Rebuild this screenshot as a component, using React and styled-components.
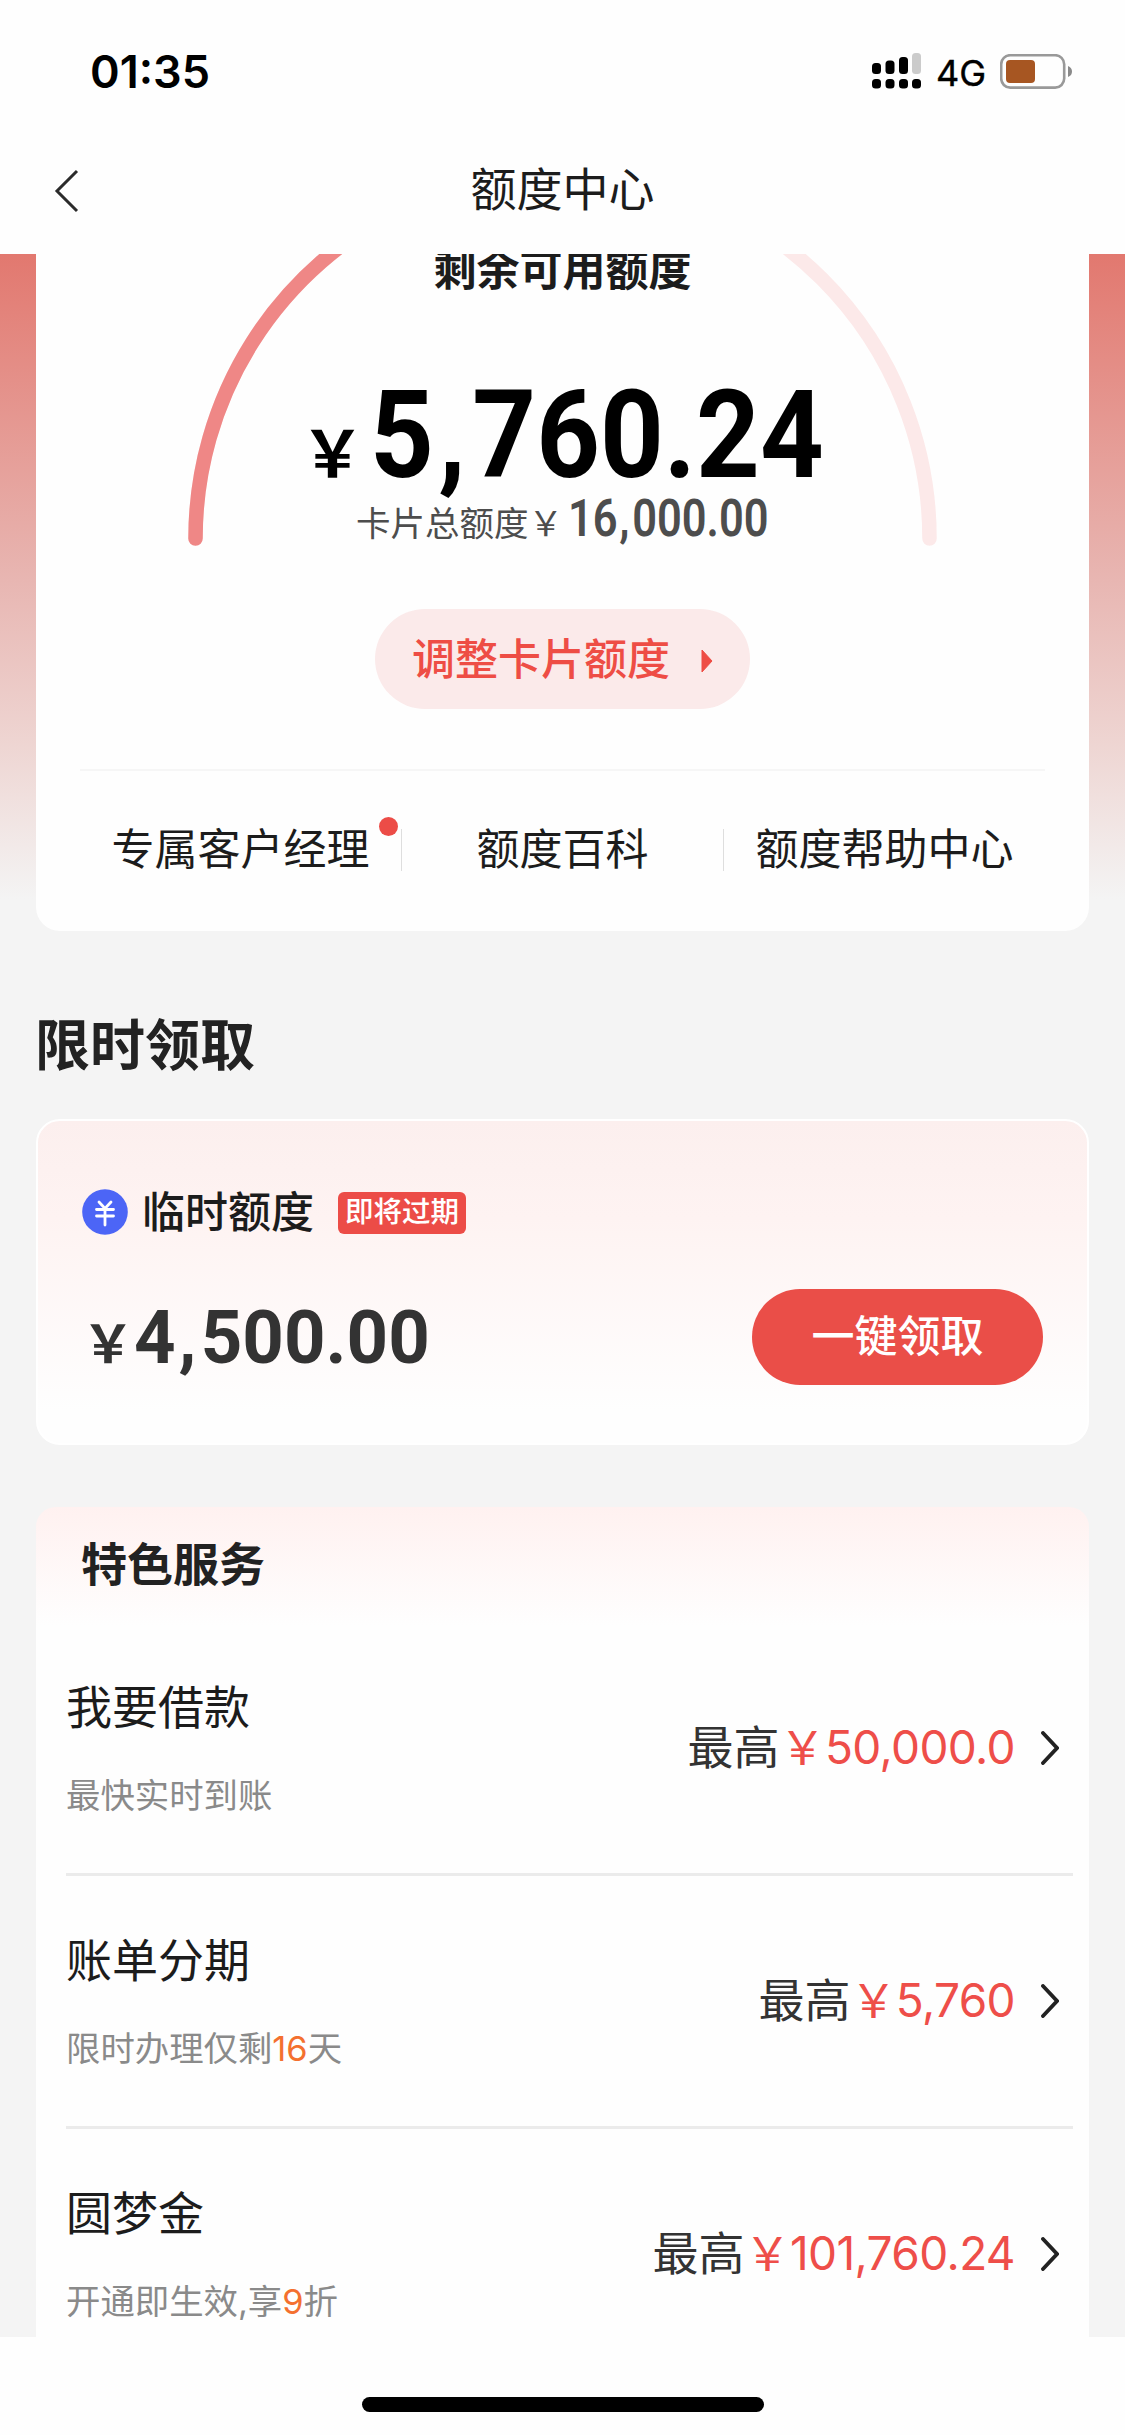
import React from 'react';
import styled, { createGlobalStyle } from 'styled-components';

const cjk = `'Noto Sans CJK SC', sans-serif`;
const latin = `Inter, 'Noto Sans CJK SC', sans-serif`;
const din = `Roboto, 'Noto Sans CJK SC', sans-serif`;

const GlobalStyle = createGlobalStyle`
  * {
    box-sizing: border-box;
  }
  body {
    margin: 0;
    background: #fefefe;
    font-family: ${cjk};
    color: #1c1c1c;
  }
`;

const Page = styled.div`
  width: 1125px;
  height: 2435px;
  display: flex;
  flex-direction: column;
  background: #fefefe;
  overflow: hidden;
`;

/* 状态栏 */
const StatusBar = styled.div`
  height: 120px;
  padding: 22px 52px 0 90px;
  display: flex;
  align-items: center;
  justify-content: space-between;
  color: #000;
  font-family: ${latin};
`;

const Clock = styled.div`
  font-size: 45px;
  font-weight: 600;
`;

const StatusIcons = styled.div`
  display: flex;
  align-items: center;
`;

const Network = styled.span`
  margin: 3px 14px 0 14px;
  font-size: 36px;
  line-height: 40px;
  font-weight: 400;
  -webkit-text-stroke: 0.4px #000;
`;

/* 导航栏 */
const NavBar = styled.div`
  height: 134px;
  padding: 0 54px;
  display: grid;
  grid-template-columns: 60px 1fr 60px;
  align-items: center;
`;

const BackIcon = styled.svg`
  margin-top: 7px;
`;

const NavTitle = styled.div`
  text-align: center;
  font-size: 46px;
  line-height: 60px;
  padding-bottom: 2px;
`;

/* 滚动区域,顶部内容被导航栏截断 */
const Scroll = styled.div`
  height: 2083px;
  padding: 0 36px;
  overflow: hidden;
  background: linear-gradient(#e2786f 0, #e8b6b2 326px, #eed5d2 490px, #f4f4f4 645px);
`;

const QuotaCard = styled.div`
  position: relative;
  height: 767px;
  margin-top: -90px;
  padding-top: 79px;
  display: flex;
  flex-direction: column;
  align-items: center;
  background: #fefefe;
  border-radius: 0 0 24px 24px;
`;

const Gauge = styled.svg`
  position: absolute;
  top: 0;
  left: 0;
`;

const QuotaLabel = styled.div`
  font-size: 43px;
  line-height: 48px;
  font-weight: 700;
`;

const AmountRow = styled.div`
  display: flex;
  align-items: baseline;
  height: ${props => props.$height}px;
  margin-top: ${props => props.$top || 0}px;
  color: ${props => props.$color};
`;

const Yen = styled.span`
  font-size: ${props => props.$size}px;
  line-height: 1;
  font-weight: 700;
`;

const Digits = styled.span`
  width: ${props => props.$width}px;
  margin-left: ${props => props.$left || 0}px;
  font-family: ${din};
  font-size: ${props => props.$size}px;
  line-height: ${props => props.$line}px;
  font-weight: ${props => props.$weight || 700};
  white-space: nowrap;
  transform: scaleX(${props => props.$scale});
  transform-origin: left;
`;

/* 千分位逗号两侧留白 */
const Comma = styled.span`
  margin: 0 0.06em 0 0.04em;
`;

const TotalLabel = styled.span`
  font-size: 34.5px;
  line-height: 40px;
`;

const AdjustButton = styled.button`
  width: 375px;
  height: 100px;
  margin-top: 60px;
  padding: 0 37px 6px 37px;
  display: flex;
  align-items: center;
  justify-content: space-between;
  border: 0;
  border-radius: 50px;
  background: #fbeaea;
  color: #ee4d45;
  font-family: ${cjk};
  font-size: 43px;
  line-height: 60px;
  font-weight: 500;

  svg {
    margin-top: 10px;
  }
`;

const Divider = styled.div`
  width: 965px;
  height: 2px;
  margin-top: 60px;
  background: #f6f6f6;
`;

const Links = styled.div`
  width: 965px;
  height: 46px;
  margin-top: 54px;
  display: grid;
  grid-template-columns: 1fr 1px 1fr 1px 1fr;
`;

const LinkItem = styled.div`
  position: relative;
  text-align: center;
  font-size: 43px;
  line-height: 43px;
`;

const RedDot = styled.i`
  position: absolute;
  top: -8px;
  right: 3px;
  width: 19px;
  height: 19px;
  border-radius: 50%;
  background: #ec4c47;
`;

const Separator = styled.div`
  height: 42px;
  margin-top: 4px;
  background: #dedede;
`;

const SectionTitle = styled.h2`
  margin: 80px 0 48px -1px;
  font-size: 55px;
  line-height: 60px;
  font-weight: 700;
  color: #222;
`;

/* 临时额度 */
const TempCard = styled.div`
  height: 326px;
  padding: 68px 44px 0 44px;
  border: 2px solid #fff;
  border-radius: 24px;
  background: linear-gradient(#fcefee 0, #fef3f2 30%, #fefefe 90%);
`;

const TempHead = styled.div`
  height: 46px;
  display: flex;
  align-items: flex-start;
`;

const TempName = styled.span`
  margin-left: 14px;
  font-size: 43px;
  line-height: 41px;
  font-weight: 500;
`;

const Badge = styled.span`
  width: 128px;
  height: 42px;
  margin: 3px 0 0 24px;
  border-radius: 6px;
  background: #ec4c47;
  color: #fff;
  text-align: center;
  font-size: 28.5px;
  line-height: 36px;
  font-weight: 500;
`;

const TempBody = styled.div`
  margin-top: 54px;
  display: flex;
  align-items: center;
  justify-content: space-between;
`;

const ClaimButton = styled.button`
  width: 291px;
  height: 96px;
  padding: 0 0 8px;
  border: 0;
  border-radius: 48px;
  background: #ea4e48;
  color: #fff;
  font-family: ${cjk};
  font-size: 43px;
  line-height: 60px;
  font-weight: 500;
`;

/* 特色服务 */
const ServiceCard = styled.div`
  margin-top: 62px;
  padding: 24px 16px 0 30px;
  border-radius: 20px;
  background: linear-gradient(#fff1f0 0, #fefefe 118px);
`;

const ServiceTitle = styled.h3`
  margin: 0 0 32px 15px;
  font-size: 46px;
  line-height: 60px;
  font-weight: 700;
  color: #222;
`;

const ServiceRow = styled.div`
  height: 253px;
  padding-right: 14px;
  display: flex;
  align-items: center;
  justify-content: space-between;
  border-bottom: 3px solid #ebebeb;
`;

const ServiceName = styled.div`
  font-size: 46px;
  line-height: 50px;
`;

const ServiceNote = styled.div`
  margin: 47px 0 1px;
  font-family: ${latin};
  font-size: 34.4px;
  line-height: 40px;
  color: #8a8a8a;
`;

const Highlight = styled.span`
  color: #f4702f;
`;

const ServiceValue = styled.div`
  display: flex;
  align-items: center;
`;

const Limit = styled.div`
  display: flex;
  align-items: baseline;
  margin-right: 26px;
  padding-bottom: 5px;
  font-size: 46px;
  line-height: 60px;
  color: #333;
`;

const LimitAmount = styled.span`
  font-family: ${latin};
  letter-spacing: -0.6px;
  color: #ee4e49;
`;

const HomeArea = styled.div`
  flex: 1;
  display: flex;
  justify-content: center;
  padding-top: 60px;
`;

const HomeBar = styled.div`
  width: 402px;
  height: 15px;
  border-radius: 8px;
  background: #000;
`;

const services = [
  { name: '我要借款', note: '最快实时到账', amount: '50,000.0' },
  { name: '账单分期', note: <>限时办理仅剩<Highlight>16</Highlight>天</>, amount: '5,760' },
  { name: '圆梦金', note: <>开通即生效,享<Highlight>9</Highlight>折</>, amount: '101,760.24' },
];

const arc = 'M159.5 374.5 A367 367 0 0 1 893.5 374.5';

const SignalIcon = () => (
  <svg width="50" height="36" viewBox="0 0 50 36">
    <rect x="0" y="10" width="9" height="11" rx="3.5" />
    <rect x="13.5" y="7.5" width="9" height="13.5" rx="3.5" />
    <rect x="27" y="4" width="9" height="17" rx="3.5" />
    <rect x="40" y="0" width="9" height="21" rx="3.5" fill="#cbcbcb" />
    {[0, 13.5, 27, 40].map(x => (
      <rect key={x} x={x} y="26" width="9" height="9.5" rx="3.5" />
    ))}
  </svg>
);

const BatteryIcon = () => (
  <svg width="73" height="35" viewBox="0 0 73 35">
    <rect x="1.2" y="1.2" width="63" height="32.4" rx="9" fill="none" stroke="#999" strokeWidth="2.6" />
    <rect x="6" y="6" width="29" height="23" rx="4" fill="#a75622" />
    <path d="M68 12 q4 1.5 4 5.5 t-4 5.5 z" fill="#8a8a8a" />
  </svg>
);

const YenIcon = () => (
  <svg width="46" height="46" viewBox="0 0 46 46">
    <circle cx="23" cy="23" r="22.8" fill="#4c65f6" />
    <g fill="none" stroke="#fff" strokeWidth="2.8" strokeLinecap="round">
      <path d="M17 13 L23 19.5 L29 13" />
      <path d="M14.5 20.5 H31.5 M14.5 27 H31.5 M23 19.5 V36" />
    </g>
  </svg>
);

export default function App() {
  return (
    <Page>
      <GlobalStyle />
      <StatusBar>
        <Clock>01:35</Clock>
        <StatusIcons>
          <SignalIcon />
          <Network>4G</Network>
          <BatteryIcon />
        </StatusIcons>
      </StatusBar>
      <NavBar>
        <BackIcon width="26" height="44" viewBox="0 0 26 44">
          <path d="M23 2 L3 22 L23 42" fill="none" stroke="#2b2b2b" strokeWidth="3" />
        </BackIcon>
        <NavTitle>额度中心</NavTitle>
      </NavBar>

      <Scroll>
        <QuotaCard>
          <Gauge width="1053" height="390" viewBox="0 0 1053 390">
            <g fill="none" strokeWidth="14.5" strokeLinecap="round">
              <path d={arc} stroke="#fce9e9" />
              <path d={arc} stroke="#ef8786" pathLength="100" strokeDasharray="36 100" />
            </g>
          </Gauge>
          <QuotaLabel>剩余可用额度</QuotaLabel>
          <AmountRow $height={100} $top={95} $color="#000">
            <Yen $size={64}>￥</Yen>
            <Digits $size={122} $line={100} $width={455} $left={5} $scale={0.912}>
              5<Comma>,</Comma>760.24
            </Digits>
          </AmountRow>
          <AmountRow $height={60} $top={3} $color="#4d4d4d">
            <TotalLabel>卡片总额度￥</TotalLabel>
            <Digits $size={52} $line={60} $width={201} $left={5} $scale={0.835} $weight={600}>
              16<Comma>,</Comma>000.00
            </Digits>
          </AmountRow>
          <AdjustButton>
            调整卡片额度
            <svg width="12" height="24" viewBox="0 0 12 24">
              <path d="M1 1 L11 12 L1 23 Z" fill="#ee4d45" stroke="#ee4d45" strokeLinejoin="round" />
            </svg>
          </AdjustButton>
          <Divider />
          <Links>
            <LinkItem>专属客户经理<RedDot /></LinkItem>
            <Separator />
            <LinkItem>额度百科</LinkItem>
            <Separator />
            <LinkItem>额度帮助中心</LinkItem>
          </Links>
        </QuotaCard>

        <SectionTitle>限时领取</SectionTitle>
        <TempCard>
          <TempHead>
            <YenIcon />
            <TempName>临时额度</TempName>
            <Badge>即将过期</Badge>
          </TempHead>
          <TempBody>
            <AmountRow $height={80} $color="#333">
              <Yen $size={52}>￥</Yen>
              <Digits $size={75} $line={80} $width={300} $scale={0.967}>
                4<Comma>,</Comma>500.00
              </Digits>
            </AmountRow>
            <ClaimButton>一键领取</ClaimButton>
          </TempBody>
        </TempCard>

        <ServiceCard>
          <ServiceTitle>特色服务</ServiceTitle>
          {services.map(item => (
            <ServiceRow key={item.name}>
              <div>
                <ServiceName>{item.name}</ServiceName>
                <ServiceNote>{item.note}</ServiceNote>
              </div>
              <ServiceValue>
                <Limit>
                  最高
                  <LimitAmount>￥{item.amount}</LimitAmount>
                </Limit>
                <svg width="18" height="34" viewBox="0 0 18 34">
                  <path d="M2 2 L16 17 L2 32" fill="none" stroke="#222" strokeWidth="3.8" strokeLinecap="round" />
                </svg>
              </ServiceValue>
            </ServiceRow>
          ))}
        </ServiceCard>
      </Scroll>

      <HomeArea>
        <HomeBar />
      </HomeArea>
    </Page>
  );
}
